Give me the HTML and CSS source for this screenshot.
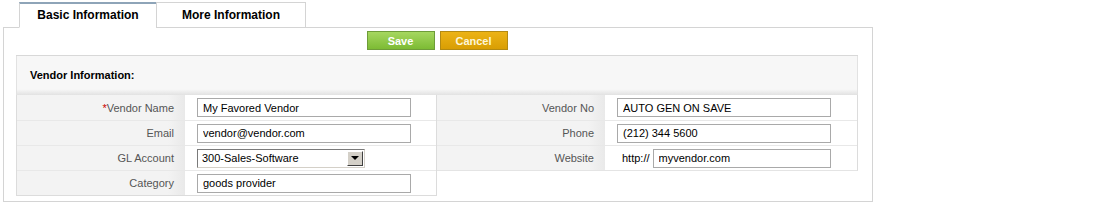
FILE: index.html
```html
<!DOCTYPE html>
<html lang="en">
<head>
    <meta charset="UTF-8">
    <title>Vendor</title>
    <link rel="stylesheet" href="styles.css">
</head>
<body>
    <div class="page">
        <div class="tabs">
            <div class="tab active">Basic Information</div>
            <div class="tab">More Information</div>
        </div>
        <div class="panel">
            <div class="actions">
                <button class="btn save">Save</button>
                <button class="btn cancel">Cancel</button>
            </div>
            <div class="section">
                <div class="section-head">Vendor Information:</div>
                <div class="cols">
                    <div class="col left">
                        <div class="row">
                            <div class="label"><span class="req">*</span>Vendor Name</div>
                            <div class="value"><input class="field" type="text" value="My Favored Vendor"></div>
                        </div>
                        <div class="row">
                            <div class="label">Email</div>
                            <div class="value"><input class="field" type="text" value="vendor@vendor.com"></div>
                        </div>
                        <div class="row">
                            <div class="label">GL Account</div>
                            <div class="value">
                                <div class="select">
                                    <span class="select-text">300-Sales-Software</span>
                                    <span class="select-btn"><span class="arrow"></span></span>
                                </div>
                            </div>
                        </div>
                        <div class="row">
                            <div class="label">Category</div>
                            <div class="value"><input class="field" type="text" value="goods provider"></div>
                        </div>
                    </div>
                    <div class="col right">
                        <div class="row">
                            <div class="label">Vendor No</div>
                            <div class="value"><input class="field" type="text" value="AUTO GEN ON SAVE"></div>
                        </div>
                        <div class="row">
                            <div class="label">Phone</div>
                            <div class="value"><input class="field" type="text" value="(212) 344 5600"></div>
                        </div>
                        <div class="row">
                            <div class="label">Website</div>
                            <div class="value">
                                <span class="prefix">http://</span>
                                <input class="field short" type="text" value="myvendor.com">
                            </div>
                        </div>
                    </div>
                </div>
            </div>
        </div>
    </div>
</body>
</html>
```

FILE: styles.css
```css
/* vendor form */

body {
    margin: 0;
    font-family: "Liberation Sans", Arial, sans-serif;
    font-size: 11px;
    background-color: #fff;
    color: #000;
}

.page {
    padding: 2px 0 0 3px;
    width: 870px;
}

.tabs {
    display: flex;
    padding-left: 16px;
    margin-bottom: -1px;
    position: relative;
}

.tab {
    box-sizing: border-box;
    height: 26px;
    padding-top: 5px;
    text-align: center;
    font-size: 12px;
    font-weight: bold;
    background-color: #fff;
    border: 1px solid #d4d4d4;
    border-bottom: 1px solid #d4d4d4;
}

.tab.active {
    width: 138px;
    border-top: 2px solid #8ea4b8;
    border-bottom-color: #fff;
    padding-top: 4px;
}

.tab + .tab {
    width: 150px;
    margin-left: -1px;
}

.panel {
    box-sizing: border-box;
    height: 175px;
    border: 1px solid #d4d4d4;
    padding: 3px 14px 0 12px;
}

.actions {
    display: flex;
    justify-content: center;
    gap: 5px;
    margin-bottom: 5px;
}

.btn {
    width: 68px;
    height: 19px;
    padding: 0;
    font-family: "Liberation Sans", Arial, sans-serif;
    font-size: 11px;
    font-weight: bold;
    color: #fff;
    cursor: pointer;
}

.btn.save {
    background: linear-gradient(#a6d760, #7cbb34);
    border: 1px solid #6e9c39;
}

.btn.cancel {
    background: linear-gradient(#ecb317, #d99e03);
    border: 1px solid #b38a13;
    color: #fdf6d8;
}

.section {
    border-top: 1px solid #d8d8d8;
}

.section-head {
    box-sizing: border-box;
    height: 39px;
    padding: 13px 0 0 13px;
    font-weight: bold;
    background: linear-gradient(#f7f7f7 85%, #e2e2e2);
    border-left: 1px solid #e2e2e2;
    border-right: 1px solid #e2e2e2;
}

.cols {
    display: flex;
    align-items: flex-start;
}

.col {
    box-sizing: border-box;
    width: 421px;
}

.col.left {
    border-left: 1px solid #dcdcdc;
    border-right: 1px solid #dcdcdc;
    border-bottom: 1px solid #dcdcdc;
}

.col.right {
    width: 421px;
    border-right: 1px solid #dcdcdc;
    border-bottom: 1px solid #e4e4e4;
}

.row {
    display: flex;
    height: 25px;
    border-top: 1px solid #e8e8e8;
    box-sizing: border-box;
}

.row:first-child {
    border-top: none;
}

.label {
    box-sizing: border-box;
    width: 168px;
    padding-right: 11px;
    display: flex;
    align-items: center;
    justify-content: flex-end;
    color: #555;
    background: linear-gradient(to right, #f3f3f3 90%, #e9e9e9);
}

.req {
    color: #c00;
}

.value {
    flex: 1;
    display: flex;
    align-items: center;
    padding-left: 12px;
}

.field {
    box-sizing: border-box;
    width: 214px;
    height: 19px;
    padding: 0 5px;
    margin: 0;
    border: 1px solid #a9a9a9;
    font-family: "Liberation Sans", Arial, sans-serif;
    font-size: 11px;
    color: #000;
}

.field.short {
    width: 178px;
}

.prefix {
    margin: 0 3px 0 5px;
}

.select {
    box-sizing: border-box;
    width: 168px;
    height: 19px;
    display: flex;
    align-items: center;
    justify-content: space-between;
    border: 1px solid #7a7a7a;
    border-right-color: #d4d0c8;
    border-bottom-color: #d4d0c8;
    padding-left: 4px;
}

.select-btn {
    box-sizing: border-box;
    width: 16px;
    height: 15px;
    margin-right: 1px;
    display: flex;
    align-items: center;
    justify-content: center;
    background-color: #d4d0c8;
    border: 1px solid;
    border-color: #fff #404040 #404040 #fff;
}

.arrow {
    width: 0;
    height: 0;
    border-left: 4px solid transparent;
    border-right: 4px solid transparent;
    border-top: 4px solid #000;
}
```
